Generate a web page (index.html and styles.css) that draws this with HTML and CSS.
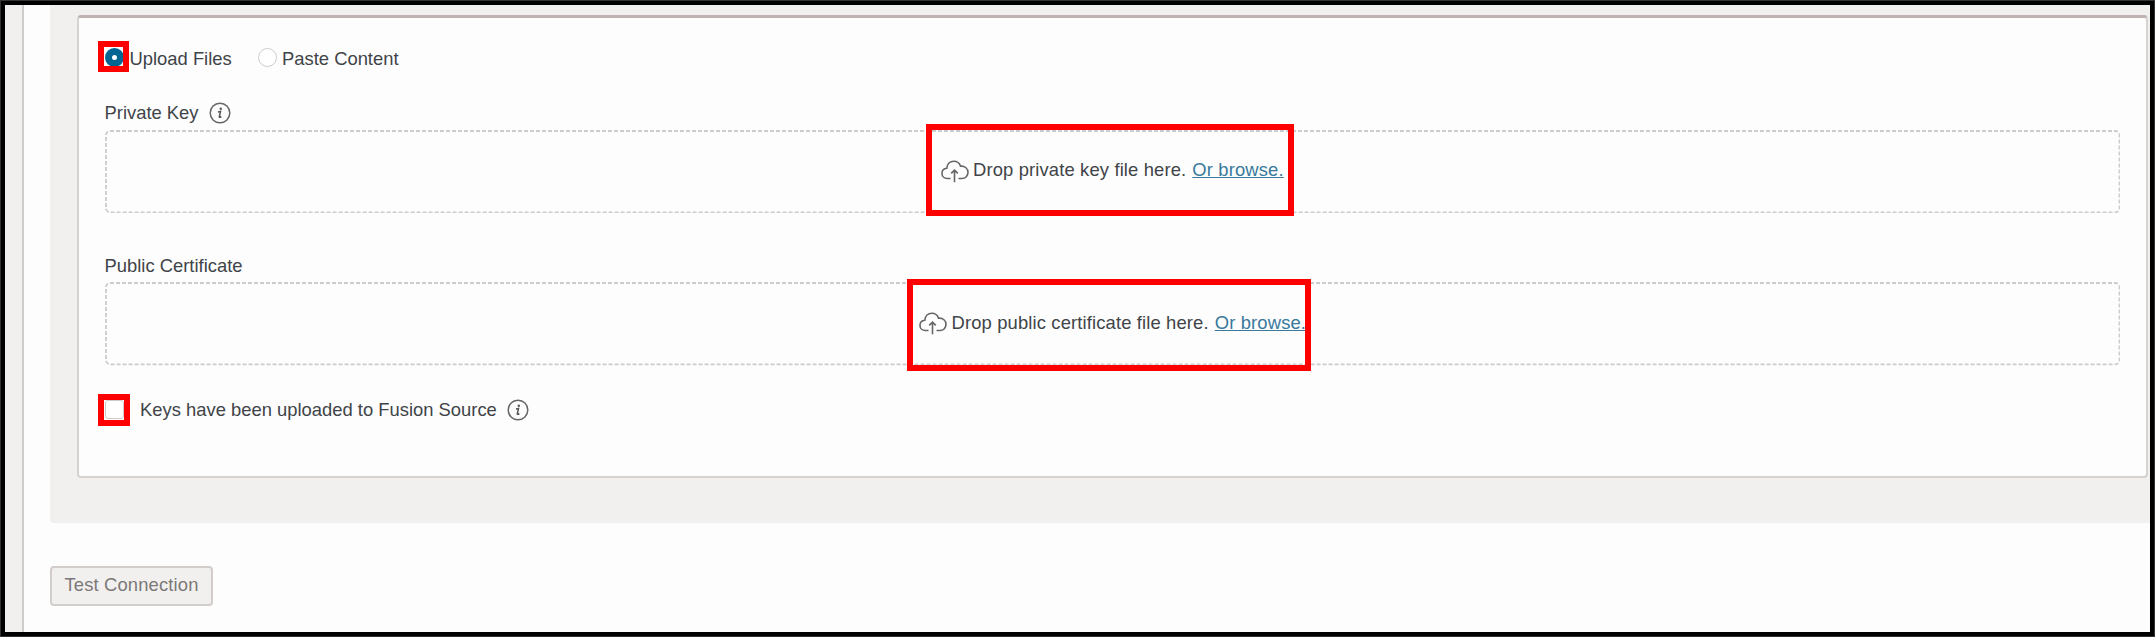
FILE: index.html
```html
<!DOCTYPE html>
<html lang="en">
<head>
<meta charset="utf-8">
<title>Connection</title>
<link rel="stylesheet" href="styles.css">
</head>
<body>
<svg class="defs" width="0" height="0">
  <symbol id="info" viewBox="0 0 22 22">
    <circle cx="11" cy="11" r="9.8" fill="none" stroke="#666" stroke-width="1.5"/>
    <circle cx="11.8" cy="6.8" r="1.2" fill="#555"/>
    <path d="M9 9.9 L11.5 9.5 L10.3 14.8 Q10.2 15.8 12.4 14.8" fill="none" stroke="#555" stroke-width="1.5"/>
  </symbol>
  <symbol id="cloud" viewBox="0 0 28 23">
    <path d="M9.5 18.5H6.5C3 18.5 1 16.2 1 13.4C1 10.6 3 8.6 5.8 8.3C6.2 4 9 1.2 12.8 1.2C16 1.2 18.5 3 19.6 6.2C24 5.8 27 8.7 27 12.3C27 15.8 24.5 18.5 21 18.5H17.5M13.5 22.3V10.5M10.2 13.4L13.5 10.2L16.8 13.4" fill="none" stroke="#666" stroke-width="1.6"/>
  </symbol>
</svg>
<div class="frame">
  <div class="rail"></div>
  <main class="main">
    <section class="panel">
      <div class="card">
        <div class="row radios">
          <span class="control"><span class="radio on"></span><span class="mark mark-radio"></span></span>
          <span class="upload">Upload Files</span>
          <span class="radio"></span>
          <span class="paste">Paste Content</span>
        </div>
        <div class="row key-label"><span>Private Key</span><svg class="info"><use href="#info"/></svg></div>
        <div class="zone">
          <svg class="dashes"><rect class="dash-rect" x="1" y="1" rx="4"/></svg>
          <div class="drop first"><svg class="cloud"><use href="#cloud"/></svg><span class="prompt">Drop private key file here.</span><a class="link">Or browse.</a><span class="mark mark-key"></span></div>
        </div>
        <div class="row cert-label"><span>Public Certificate</span></div>
        <div class="zone">
          <svg class="dashes"><rect class="dash-rect" x="1" y="1" rx="4"/></svg>
          <div class="drop second"><svg class="cloud"><use href="#cloud"/></svg><span class="prompt">Drop public certificate file here.</span><a class="link">Or browse.</a><span class="mark mark-cert"></span></div>
        </div>
        <div class="row confirm">
          <span class="control"><span class="checkbox"></span><span class="mark mark-check"></span></span>
          <span class="confirm-text">Keys have been uploaded to Fusion Source</span><svg class="info"><use href="#info"/></svg>
        </div>
      </div>
    </section>
    <button class="test">Test Connection</button>
  </main>
</div>
</body>
</html>
```

FILE: styles.css
```css
* { box-sizing: border-box; }
body {
  margin: 0;
  width: 2155px;
  height: 637px;
  overflow: hidden;
  background: #333;
  padding: 1px;
  font: 18.4px/24px "Liberation Sans", Arial, sans-serif;
  color: #404448;
}
.defs { position: absolute; }
.frame {
  display: flex;
  width: 2153px;
  height: 635px;
  border: 4px solid #000;
  background: #fdfdfd;
}
.rail { width: 19px; background: #f2f0ef; border-right: 2px solid #ccc; flex: none; }
.main { flex: 1; padding-left: 26px; }
.panel {
  height: 517.5px;
  padding: 10px 2px 45px 27px;
  background: #f2f0ef;
  border-bottom-left-radius: 3px;
}
.card {
  height: 462.5px;
  border: 2px solid #d5d2d0;
  border-top: 3px solid #beb3b1;
  border-radius: 4px;
  background: #fdfdfd;
  padding: 28.6px 26px 0 25.5px;
}
.row { display: flex; align-items: center; height: 24px; white-space: nowrap; }
.control { position: relative; width: 19px; height: 19px; flex: none; }
.radio {
  display: block;
  width: 19px;
  height: 19px;
  border: 1.5px solid #ccc;
  border-radius: 50%;
  background: #fff;
  flex: none;
  margin-top: -3px;
}
.radio.on { border: 6.5px solid #026592; border-width: 7px; background: #fff; margin-top: -1.5px; }
.upload { width: 128px; margin-left: 6px; }
.paste { margin-left: 5.5px; }
.key-label { margin-top: 30.4px; }
.key-label .info { margin-left: 10px; }
.info { width: 22px; height: 22px; flex: none; }
.zone {
  position: relative;
  height: 83.3px;
  margin-top: 4.7px;
  display: flex;
  align-items: center;
  padding-bottom: 2px;
}
.dashes { position: absolute; inset: 0; width: 100%; height: 100%; }
.dash-rect {
  width: calc(100% - 2px);
  height: calc(100% - 2px);
  fill: none;
  stroke: #ccc;
  stroke-width: 1.8px;
  stroke-dasharray: 4 2;
}
.drop { position: relative; display: flex; align-items: center; white-space: nowrap; letter-spacing: .14px; }
.first { margin-left: 836px; }
.second { margin-left: 814.5px; }
.cloud { width: 28px; height: 23px; margin: 2px 4.5px 0 0; }
.link { color: #38799c; text-decoration: underline; margin-left: 6px; }
.cert-label { margin-top: 41px; }
.cert-label + .zone { margin-top: 4.3px; }
.confirm { margin-top: 32.2px; }
.checkbox { display: block; width: 19px; height: 19px; border: 1.5px solid #ccc; border-radius: 3px; background: #fff; }
.confirm-text { margin-left: 16.5px; }
.confirm .info { margin-left: 10.5px; }
/* Callout outlines laid over the controls */
.mark { position: absolute; border: 6px solid #f00; }
.mark-radio { left: -7px; top: -8px; width: 31px; height: 31px; }
.mark-key { left: -14.5px; top: -34px; width: 368px; height: 92px; }
.mark-cert { left: -12px; top: -31px; width: 404px; height: 92px; }
.mark-check { left: -7px; top: -6px; width: 32px; height: 32px; }
.test {
  display: block;
  width: 163px;
  height: 40px;
  margin-top: 43.5px;
  padding: 0 0 2px;
  border: 2px solid #d2cdcb;
  border-radius: 4px;
  background: #f2f0ef;
  color: #7b7877;
  font: inherit;
  letter-spacing: .15px;
}
```
